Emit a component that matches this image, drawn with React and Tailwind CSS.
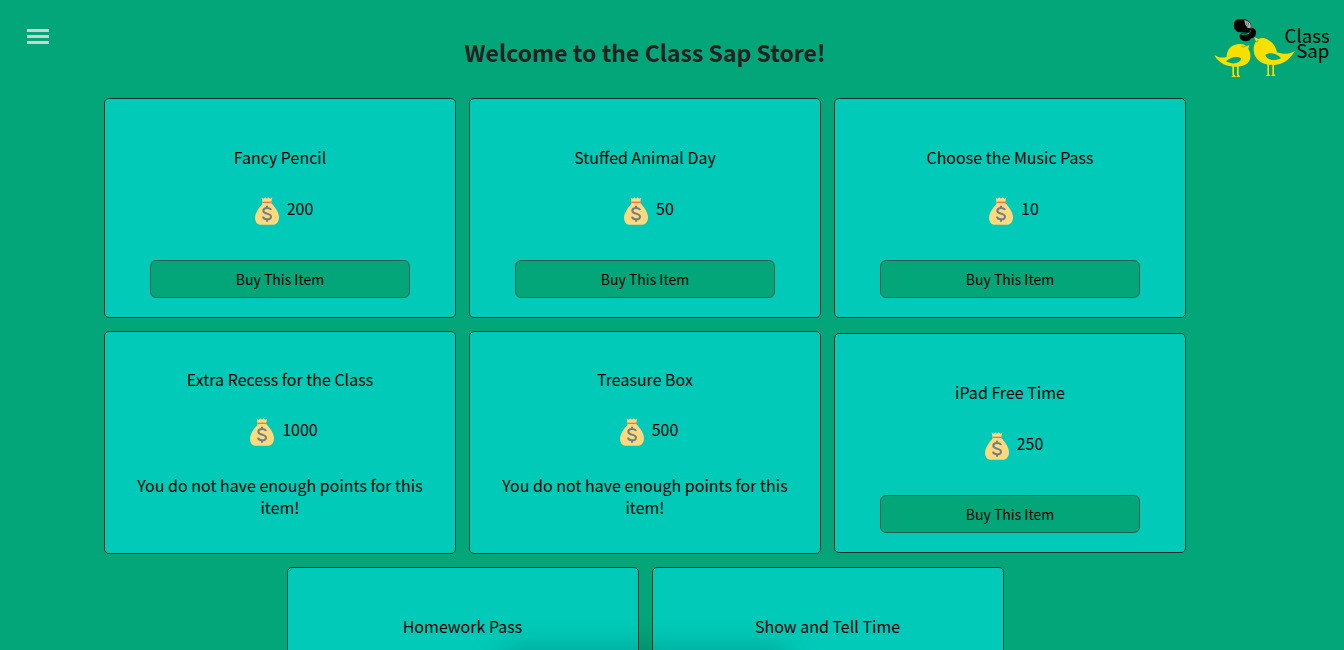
import { useId } from "react";

const items = [
  { name: "Fancy Pencil", price: 200, affordable: true },
  { name: "Stuffed Animal Day", price: 50, affordable: true },
  { name: "Choose the Music Pass", price: 10, affordable: true },
  { name: "Extra Recess for the Class", price: 1000, affordable: false },
  { name: "Treasure Box", price: 500, affordable: false },
  { name: "iPad Free Time", price: 250, affordable: true },
  { name: "Homework Pass", price: 100, affordable: true },
  { name: "Show and Tell Time", price: 75, affordable: true },
];

function MoneyBag() {
  return (
    <svg viewBox="0 0 72 84" className="h-7 w-6 shrink-0" aria-hidden="true">
      <path
        d="M20 1l6 4 5-4 5 4 5-4 5 4 6-4-3 13v5c8 8 22 24 23 41 0 12-5 21-15 23H15C5 81 0 73 0 62c1-17 13-31 22-41v-7z"
        fill="#ffd97b"
      />
      <path d="M22 14h28v4H22z" fill="#e8745a" />
      <path
        d="M48 39c-2-5-7-6-12-6-7 0-11 3-11 8 0 6 5 7 11 9s12 3 12 9c0 5-5 8-12 8-6 0-11-2-12-8M36 26v7M36 67v7"
        fill="none"
        stroke="#6f7d86"
        strokeWidth="6"
      />
    </svg>
  );
}

function Logo() {
  return (
    <svg
      viewBox="0 0 432 255"
      className="h-[85px] w-36"
      role="img"
      aria-label="Class Sap"
    >
      <g fill="#f7e000">
        <path d="M43 150c13 8 25 10 37 5 1-22 14-36 36-38 10-1 18 1 24 7l8-4-3 11c7 12 8 24 4 34-7 14-21 20-41 20-29 0-52-10-65-35z" />
        <path d="M97 183h5v27h-5zM111 183h5v27h-5zM94 216l8-8 6 8zM108 216l8-8 5 8z" />
        <path d="M162 96l13 6c8-4 19-4 29 2 15 9 23 20 27 38 20 7 36 6 54-4-16 26-37 42-65 42-27 0-46-9-54-26-7-15-7-31 2-45z" />
        <path d="M202 176h5v32h-5zM217 176h5v32h-5zM197 213l9-8 5 8zM213 213l8-8 6 8z" />
      </g>
      <path d="M78 169c14-14 35-17 45-9 1 13-23 22-45 9zM243 159c-13-15-37-18-47-9 3 14 28 21 47 9z" fill="#03a678" />
      <path d="M126 43h-8c-12 0-17 9-16 19 0 12 7 19 18 20l20 1h7c7-4 9-21 2-31-5-8-14-9-23-9z" />
      <path d="M154 68c10 0 16 9 14 18-2 9-7 13-15 14l-4 6c-5 3-15 3-20 1-10-3-13-14-7-22l22 1c8-2 10-9 10-18z" />
      <path d="M118 83c8 8 21 8 29 1" fill="none" stroke="#03a678" strokeWidth="3" />
      <path d="M133 46l3 13 7 10 9 1c2-12-4-23-19-24z" fill="#b5b5b5" />
      <path d="M141 48l-2 13M146 52l-3 16" fill="none" stroke="#555" strokeWidth="2" />
      <path d="M124 124l6 2 8-3M168 111l5-1 1-5" fill="none" stroke="#6f8a20" strokeWidth="2" />
      <g fontFamily="'Noto Sans CJK SC', sans-serif" fontSize="56" textAnchor="end">
        <text x="389" y="114">Class</text>
        <text x="388" y="160">Sap</text>
      </g>
    </svg>
  );
}

function ItemCard({ name, price, affordable }) {
  const id = useId();
  return (
    <article
      aria-labelledby={id}
      className={
        "flex w-[352px] flex-col items-center rounded-[5px] border border-[#05332c] bg-[#01cbb8] text-base leading-[22px] " +
        (affordable ? "px-[45px] pt-[47px] pb-[19px]" : "px-6 pt-9 pb-[35px]")
      }
    >
      <h2 id={id}>{name}</h2>
      <p className={"flex items-start gap-2 pl-2 " + (affordable ? "mt-[29px]" : "mt-7")}>
        <MoneyBag />
        {price}
      </p>
      {affordable ? (
        <button
          type="button"
          className="mt-[35px] h-[38px] w-full rounded-md border border-[#285c50] bg-[#03a678] text-sm"
        >
          Buy This Item
        </button>
      ) : (
        <p className="mt-7 text-center">You do not have enough points for this item!</p>
      )}
    </article>
  );
}

export default function App() {
  return (
    <div className="min-h-screen bg-[#03a678] pb-8 font-['Noto_Sans_CJK_SC',sans-serif] text-black">
      <header className="grid h-[98px] grid-cols-[90px_1fr_144px] items-start">
        <button type="button" aria-label="Open menu" className="mt-[29px] ml-[27px] flex w-[22px] flex-col gap-[3px]">
          <span className="h-[3px] w-full bg-[#d3cfcf]" />
          <span className="h-[3px] w-full bg-[#d3cfcf]" />
          <span className="h-[3px] w-full bg-[#d3cfcf]" />
        </button>
        <h1 className="mt-8 text-center text-[23px] leading-10 font-bold text-[#212121]">
          Welcome to the Class Sap Store!
        </h1>
        <a href="#home" className="mt-[5px]">
          <Logo />
        </a>
      </header>
      <main className="pr-[54px]">
        <div className="mx-auto flex max-w-[1100px] flex-wrap items-center justify-center gap-[13px]">
          {items.map((item) => (
            <ItemCard key={item.name} {...item} />
          ))}
        </div>
      </main>
      <div className="pointer-events-none fixed inset-x-0 top-full flex justify-center pr-[54px]">
        <div className="h-24 w-72 shadow-[0_0_30px_rgba(0,0,0,0.22)]" />
      </div>
    </div>
  );
}
